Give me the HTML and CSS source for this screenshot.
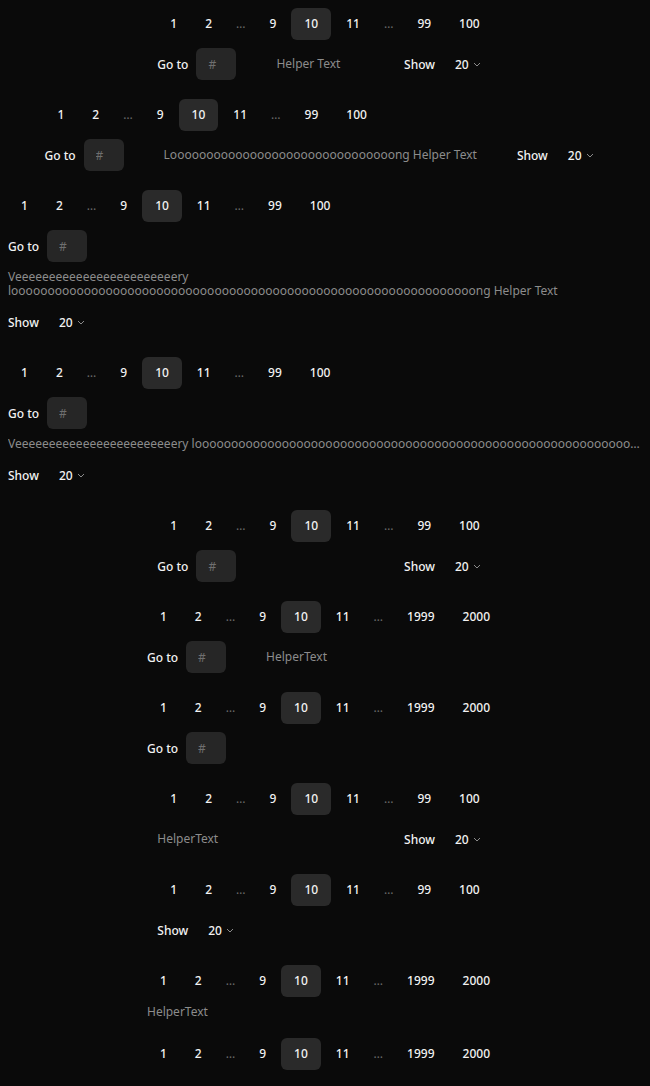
FILE: index.html
```html
<!DOCTYPE html>
<html lang="en">
<head>
  <meta charset="UTF-8">
  <meta name="viewport" content="width=device-width, initial-scale=1.0">
  <title>Pagination</title>
  <link rel="stylesheet" href="styles.css">
</head>
<body>
  <!-- Full: go to, helper, page size -->
  <div class="pager">
    <div class="pages">
      <span class="page">1</span><span class="page">2</span><span class="ellipsis">…</span><span class="page">9</span><span class="page active">10</span><span class="page">11</span><span class="ellipsis">…</span><span class="page">99</span><span class="page">100</span>
    </div>
    <div class="pager-footer">
      <div class="goto"><span class="label">Go to</span><input class="goto-input" type="text" placeholder="#"></div>
      <div class="helper">Helper Text</div>
      <div class="page-size"><span class="label">Show</span><div class="select">20 <svg width="8" height="8" viewBox="0 0 8 8"><path d="M1 3l3 3 3-3" fill="none" stroke="#8a8a8a" stroke-width="1"/></svg></div></div>
    </div>
  </div>

  <!-- Long helper -->
  <div class="pager">
    <div class="pages">
      <span class="page">1</span><span class="page">2</span><span class="ellipsis">…</span><span class="page">9</span><span class="page active">10</span><span class="page">11</span><span class="ellipsis">…</span><span class="page">99</span><span class="page">100</span>
    </div>
    <div class="pager-footer">
      <div class="goto"><span class="label">Go to</span><input class="goto-input" type="text" placeholder="#"></div>
      <div class="helper">Looooooooooooooooooooooooooooooong Helper Text</div>
      <div class="page-size"><span class="label">Show</span><div class="select">20 <svg width="8" height="8" viewBox="0 0 8 8"><path d="M1 3l3 3 3-3" fill="none" stroke="#8a8a8a" stroke-width="1"/></svg></div></div>
    </div>
  </div>

  <!-- Very long helper, wrapping -->
  <div class="pager">
    <div class="pages">
      <span class="page">1</span><span class="page">2</span><span class="ellipsis">…</span><span class="page">9</span><span class="page active">10</span><span class="page">11</span><span class="ellipsis">…</span><span class="page">99</span><span class="page">100</span>
    </div>
    <div class="pager-footer">
      <div class="goto"><span class="label">Go to</span><input class="goto-input" type="text" placeholder="#"></div>
      <div class="helper">Veeeeeeeeeeeeeeeeeeeeeeeery loooooooooooooooooooooooooooooooooooooooooooooooooooooooooooooooong Helper Text</div>
      <div class="page-size"><span class="label">Show</span><div class="select">20 <svg width="8" height="8" viewBox="0 0 8 8"><path d="M1 3l3 3 3-3" fill="none" stroke="#8a8a8a" stroke-width="1"/></svg></div></div>
    </div>
  </div>

  <!-- Very long helper, truncated -->
  <div class="pager">
    <div class="pages">
      <span class="page">1</span><span class="page">2</span><span class="ellipsis">…</span><span class="page">9</span><span class="page active">10</span><span class="page">11</span><span class="ellipsis">…</span><span class="page">99</span><span class="page">100</span>
    </div>
    <div class="pager-footer">
      <div class="goto"><span class="label">Go to</span><input class="goto-input" type="text" placeholder="#"></div>
      <div class="helper truncate">Veeeeeeeeeeeeeeeeeeeeeeeery loooooooooooooooooooooooooooooooooooooooooooooooooooooooooooooooong Helper Text</div>
      <div class="page-size"><span class="label">Show</span><div class="select">20 <svg width="8" height="8" viewBox="0 0 8 8"><path d="M1 3l3 3 3-3" fill="none" stroke="#8a8a8a" stroke-width="1"/></svg></div></div>
    </div>
  </div>

  <!-- Go to + page size -->
  <div class="pager">
    <div class="pages">
      <span class="page">1</span><span class="page">2</span><span class="ellipsis">…</span><span class="page">9</span><span class="page active">10</span><span class="page">11</span><span class="ellipsis">…</span><span class="page">99</span><span class="page">100</span>
    </div>
    <div class="pager-footer">
      <div class="goto"><span class="label">Go to</span><input class="goto-input" type="text" placeholder="#"></div>
      <div class="helper"></div>
      <div class="page-size"><span class="label">Show</span><div class="select">20 <svg width="8" height="8" viewBox="0 0 8 8"><path d="M1 3l3 3 3-3" fill="none" stroke="#8a8a8a" stroke-width="1"/></svg></div></div>
    </div>
  </div>

  <!-- Go to + helper -->
  <div class="pager">
    <div class="pages">
      <span class="page">1</span><span class="page">2</span><span class="ellipsis">…</span><span class="page">9</span><span class="page active">10</span><span class="page">11</span><span class="ellipsis">…</span><span class="page">1999</span><span class="page">2000</span>
    </div>
    <div class="pager-footer">
      <div class="goto"><span class="label">Go to</span><input class="goto-input" type="text" placeholder="#"></div>
      <div class="helper">HelperText</div>
    </div>
  </div>

  <!-- Go to only -->
  <div class="pager">
    <div class="pages">
      <span class="page">1</span><span class="page">2</span><span class="ellipsis">…</span><span class="page">9</span><span class="page active">10</span><span class="page">11</span><span class="ellipsis">…</span><span class="page">1999</span><span class="page">2000</span>
    </div>
    <div class="pager-footer">
      <div class="goto"><span class="label">Go to</span><input class="goto-input" type="text" placeholder="#"></div>
    </div>
  </div>

  <!-- Helper + page size -->
  <div class="pager">
    <div class="pages">
      <span class="page">1</span><span class="page">2</span><span class="ellipsis">…</span><span class="page">9</span><span class="page active">10</span><span class="page">11</span><span class="ellipsis">…</span><span class="page">99</span><span class="page">100</span>
    </div>
    <div class="pager-footer">
      <div class="helper">HelperText</div>
      <div class="page-size"><span class="label">Show</span><div class="select">20 <svg width="8" height="8" viewBox="0 0 8 8"><path d="M1 3l3 3 3-3" fill="none" stroke="#8a8a8a" stroke-width="1"/></svg></div></div>
    </div>
  </div>

  <!-- Page size only -->
  <div class="pager">
    <div class="pages">
      <span class="page">1</span><span class="page">2</span><span class="ellipsis">…</span><span class="page">9</span><span class="page active">10</span><span class="page">11</span><span class="ellipsis">…</span><span class="page">99</span><span class="page">100</span>
    </div>
    <div class="pager-footer">
      <div class="page-size"><span class="label">Show</span><div class="select">20 <svg width="8" height="8" viewBox="0 0 8 8"><path d="M1 3l3 3 3-3" fill="none" stroke="#8a8a8a" stroke-width="1"/></svg></div></div>
    </div>
  </div>

  <!-- Helper only -->
  <div class="pager">
    <div class="pages">
      <span class="page">1</span><span class="page">2</span><span class="ellipsis">…</span><span class="page">9</span><span class="page active">10</span><span class="page">11</span><span class="ellipsis">…</span><span class="page">1999</span><span class="page">2000</span>
    </div>
    <div class="pager-footer">
      <div class="helper">HelperText</div>
    </div>
  </div>

  <!-- Pages only -->
  <div class="pager">
    <div class="pages">
      <span class="page">1</span><span class="page">2</span><span class="ellipsis">…</span><span class="page">9</span><span class="page active">10</span><span class="page">11</span><span class="ellipsis">…</span><span class="page">1999</span><span class="page">2000</span>
    </div>
  </div>
</body>
</html>
```

FILE: styles.css
```css
body {
  font-family: 'Noto Sans', sans-serif;
  font-size: 12px;
  margin: 8px;
  background-color: #0a0a0a;
  color: #f2f2f2;
  display: flex;
  flex-direction: column;
  align-items: center;
  gap: 19px;
}

/* Pager block */
.pager {
  display: flex;
  flex-direction: column;
  gap: 8px;
  max-width: 100%;
}

.pages {
  display: flex;
  gap: 2px;
}

.page {
  height: 32px;
  line-height: 32px;
  padding: 0 13px;
  border-radius: 6px;
  font-weight: 500;
  white-space: nowrap;
}

.page.active {
  background-color: #2a2a2a;
}

.ellipsis {
  height: 32px;
  line-height: 32px;
  padding: 0 9px;
  color: #6b6b6b;
}

/* Footer */
.pager-footer {
  display: flex;
  flex-wrap: wrap;
  align-items: center;
  column-gap: 40px;
  row-gap: 8px;
}

.label {
  font-weight: 500;
}

.goto {
  display: flex;
  align-items: center;
  gap: 8px;
}

.goto-input {
  width: 40px;
  height: 32px;
  box-sizing: border-box;
  padding: 0 12px;
  border: none;
  border-radius: 6px;
  background-color: #262626;
  color: #f2f2f2;
  font-family: inherit;
  font-size: 12px;
  outline: none;
}

.goto-input::placeholder {
  color: #6f6f6f;
}

.helper {
  flex: 1 1 auto;
  color: #8c8c8c;
  line-height: 14px;
}

.helper.truncate {
  white-space: nowrap;
  overflow: hidden;
  text-overflow: ellipsis;
}

.page-size {
  display: flex;
  align-items: center;
  gap: 8px;
}

.select {
  height: 32px;
  padding: 0 12px;
  display: flex;
  align-items: center;
  gap: 4px;
  font-weight: 500;
}
```
